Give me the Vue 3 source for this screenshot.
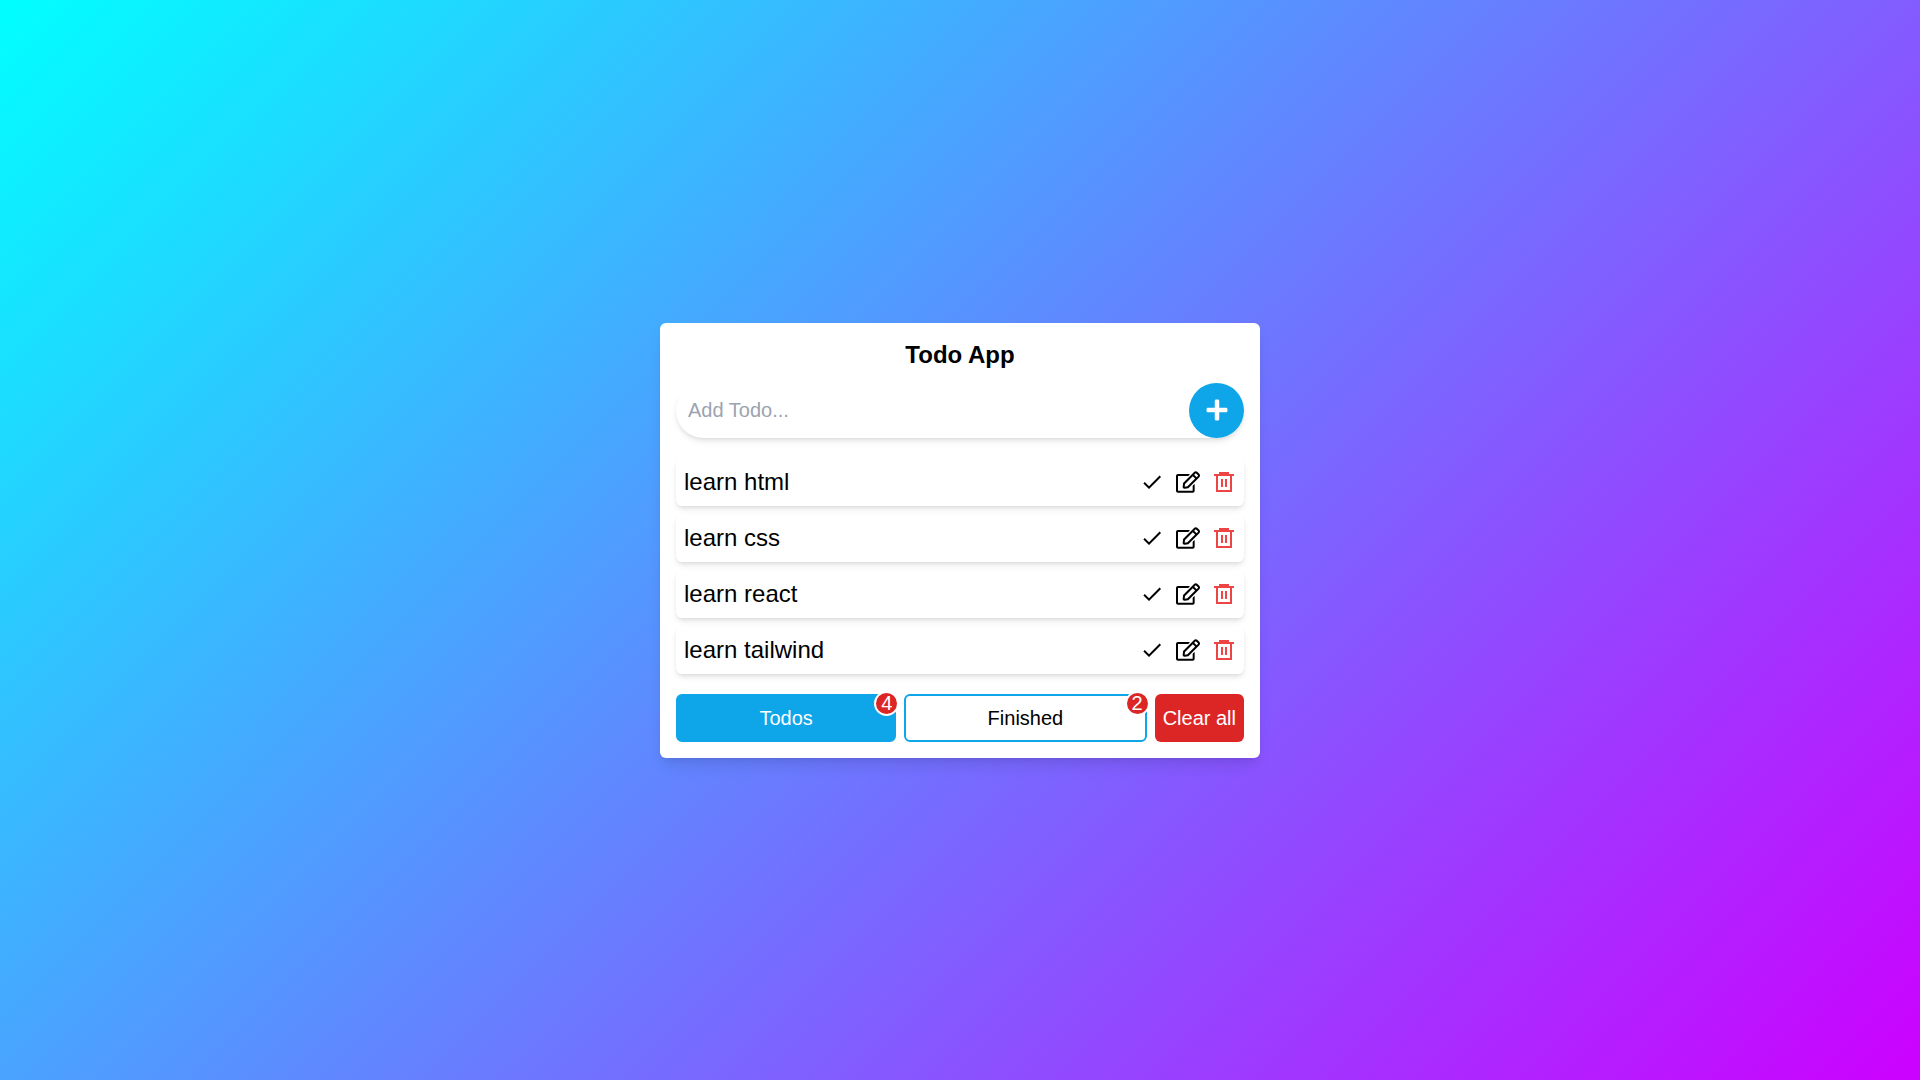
<script setup>
import { ref } from 'vue'

const draft = ref('')
const todos = ref(['learn html', 'learn css', 'learn react', 'learn tailwind'])
const finishedCount = ref(2)

function addTodo() {
  const text = draft.value.trim()
  if (!text) return
  todos.value.push(text)
  draft.value = ''
}

function finish(index) {
  todos.value.splice(index, 1)
  finishedCount.value += 1
}

function edit(index) {
  draft.value = todos.value[index]
  todos.value.splice(index, 1)
}

function remove(index) {
  todos.value.splice(index, 1)
}

function clearAll() {
  todos.value = []
  finishedCount.value = 0
}
</script>

<template>
  <main class="page">
    <section class="card">
      <h1 class="title">Todo App</h1>

      <form class="add-form" @submit.prevent="addTodo">
        <input v-model="draft" class="add-input" type="text" placeholder="Add Todo..." aria-label="Add todo" />
        <button class="add-button" type="submit" aria-label="Add">
          <svg class="icon" viewBox="0 0 448 512" aria-hidden="true">
            <path d="M416 208H272V64c0-17.67-14.33-32-32-32h-32c-17.67 0-32 14.33-32 32v144H32c-17.67 0-32 14.33-32 32v32c0 17.67 14.33 32 32 32h144v144c0 17.67 14.33 32 32 32h32c17.67 0 32-14.33 32-32V304h144c17.67 0 32-14.33 32-32v-32c0-17.67-14.33-32-32-32z" />
          </svg>
        </button>
      </form>

      <ul class="list">
        <li v-for="(todo, index) in todos" :key="todo" class="item">
          <span class="item-text">{{ todo }}</span>
          <div class="actions">
            <button class="action" type="button" aria-label="Finish" @click="finish(index)">
              <svg class="icon" viewBox="0 0 24 24" aria-hidden="true">
                <path d="M9 16.2L4.8 12l-1.4 1.4L9 19 21 7l-1.4-1.4L9 16.2z" />
              </svg>
            </button>
            <button class="action" type="button" aria-label="Edit" @click="edit(index)">
              <svg class="icon" viewBox="0 0 576 512" aria-hidden="true">
                <path d="M402.3 344.9l32-32c5-5 13.7-1.5 13.7 5.7V464c0 26.5-21.5 48-48 48H48c-26.5 0-48-21.5-48-48V112c0-26.5 21.5-48 48-48h273.5c7.1 0 10.7 8.6 5.7 13.7l-32 32c-1.5 1.5-3.5 2.3-5.7 2.3H48v352h352V350.5c0-2.1.8-4.1 2.3-5.6zm156.6-201.8L296.3 405.7l-90.4 10c-26.2 2.9-48.5-19.2-45.6-45.6l10-90.4L432.9 17.1c22.9-22.9 59.9-22.9 82.7 0l43.2 43.2c22.9 22.9 22.9 60 .1 82.8zM460.1 174L402 115.9 216.2 301.8l-7.3 65.3 65.3-7.3L460.1 174zm64.8-79.7l-43.2-43.2c-4.1-4.1-10.8-4.1-14.8 0L436 82l58.1 58.1 30.9-30.9c4-4.2 4-10.8-.1-14.9z" />
              </svg>
            </button>
            <button class="action danger" type="button" aria-label="Delete" @click="remove(index)">
              <svg class="icon" viewBox="0 0 24 24" aria-hidden="true">
                <path d="M7 2h10v2h5v2h-2v16H4V6H2V4h5zM6 6v14h12V6zM9 9h2v8H9zM13 9h2v8h-2z" fill-rule="evenodd" />
              </svg>
            </button>
          </div>
        </li>
      </ul>

      <div class="footer">
        <button class="tab active" type="button">
          Todos<span class="badge">{{ todos.length }}</span>
        </button>
        <button class="tab" type="button">
          Finished<span class="badge">{{ finishedCount }}</span>
        </button>
        <button class="clear" type="button" @click="clearAll">Clear all</button>
      </div>
    </section>
  </main>
</template>

<style>
body {
  margin: 0;
}
</style>

<style scoped>
* {
  box-sizing: border-box;
}

.page {
  min-height: 100vh;
  display: flex;
  align-items: center;
  justify-content: center;
  background: linear-gradient(135deg, #00ffff, #cc00ff);
  font-family: "Liberation Sans", Arial, sans-serif;
  color: #000;
}

button,
input {
  font: inherit;
  color: inherit;
  margin: 0;
  padding: 0;
  border: 0;
  background: none;
}

button {
  cursor: pointer;
}

.card {
  width: 100%;
  max-width: 600px;
  padding: 16px;
  border-radius: 6px;
  background: #fff;
  box-shadow: 0 10px 15px -3px rgba(0, 0, 0, 0.1), 0 4px 6px -4px rgba(0, 0, 0, 0.1);
}

.title {
  margin: 0 0 12px;
  font-size: 24px;
  line-height: 32px;
  font-weight: 700;
  text-align: center;
}

.add-form {
  display: flex;
  height: 55px;
  margin-bottom: 20px;
  border-radius: 28px;
  box-shadow: 0 4px 6px -1px rgba(0, 0, 0, 0.1), 0 2px 4px -2px rgba(0, 0, 0, 0.1);
}

.add-input {
  flex: 1;
  min-width: 0;
  padding: 0 12px;
  font-size: 20px;
  outline: none;
}

.add-input::placeholder {
  color: #9ca3af;
  opacity: 1;
}

.add-button {
  display: flex;
  align-items: center;
  justify-content: center;
  width: 55px;
  border-radius: 50%;
  background: #0ea5e9;
  color: #fff;
}

.icon {
  display: block;
  width: 24px;
  height: 24px;
  fill: currentColor;
}

.list {
  display: flex;
  flex-direction: column;
  gap: 8px;
  margin: 0 0 20px;
  padding: 0;
  list-style: none;
}

.item {
  display: flex;
  align-items: center;
  justify-content: space-between;
  padding: 8px;
  border-radius: 6px;
  font-size: 24px;
  line-height: 32px;
  box-shadow: 0 4px 6px -1px rgba(0, 0, 0, 0.1), 0 2px 4px -2px rgba(0, 0, 0, 0.1);
}

.actions {
  display: flex;
  gap: 12px;
}

.danger {
  color: #ef4444;
}

.footer {
  display: flex;
  gap: 8px;
  font-size: 20px;
  line-height: 28px;
}

.tab {
  position: relative;
  flex: 1 1 auto;
  height: 48px;
  border: 2px solid #0ea5e9;
  border-radius: 6px;
}

.active {
  background: #0ea5e9;
  color: #fff;
}

.badge {
  position: absolute;
  top: -5px;
  right: -5px;
  display: flex;
  align-items: center;
  justify-content: center;
  width: 25px;
  height: 25px;
  border: 2px solid #fff;
  border-radius: 50%;
  background: #dc2626;
  color: #fff;
}

.clear {
  padding: 0 8px;
  border-radius: 6px;
  background: #dc2626;
  color: #fff;
}
</style>
